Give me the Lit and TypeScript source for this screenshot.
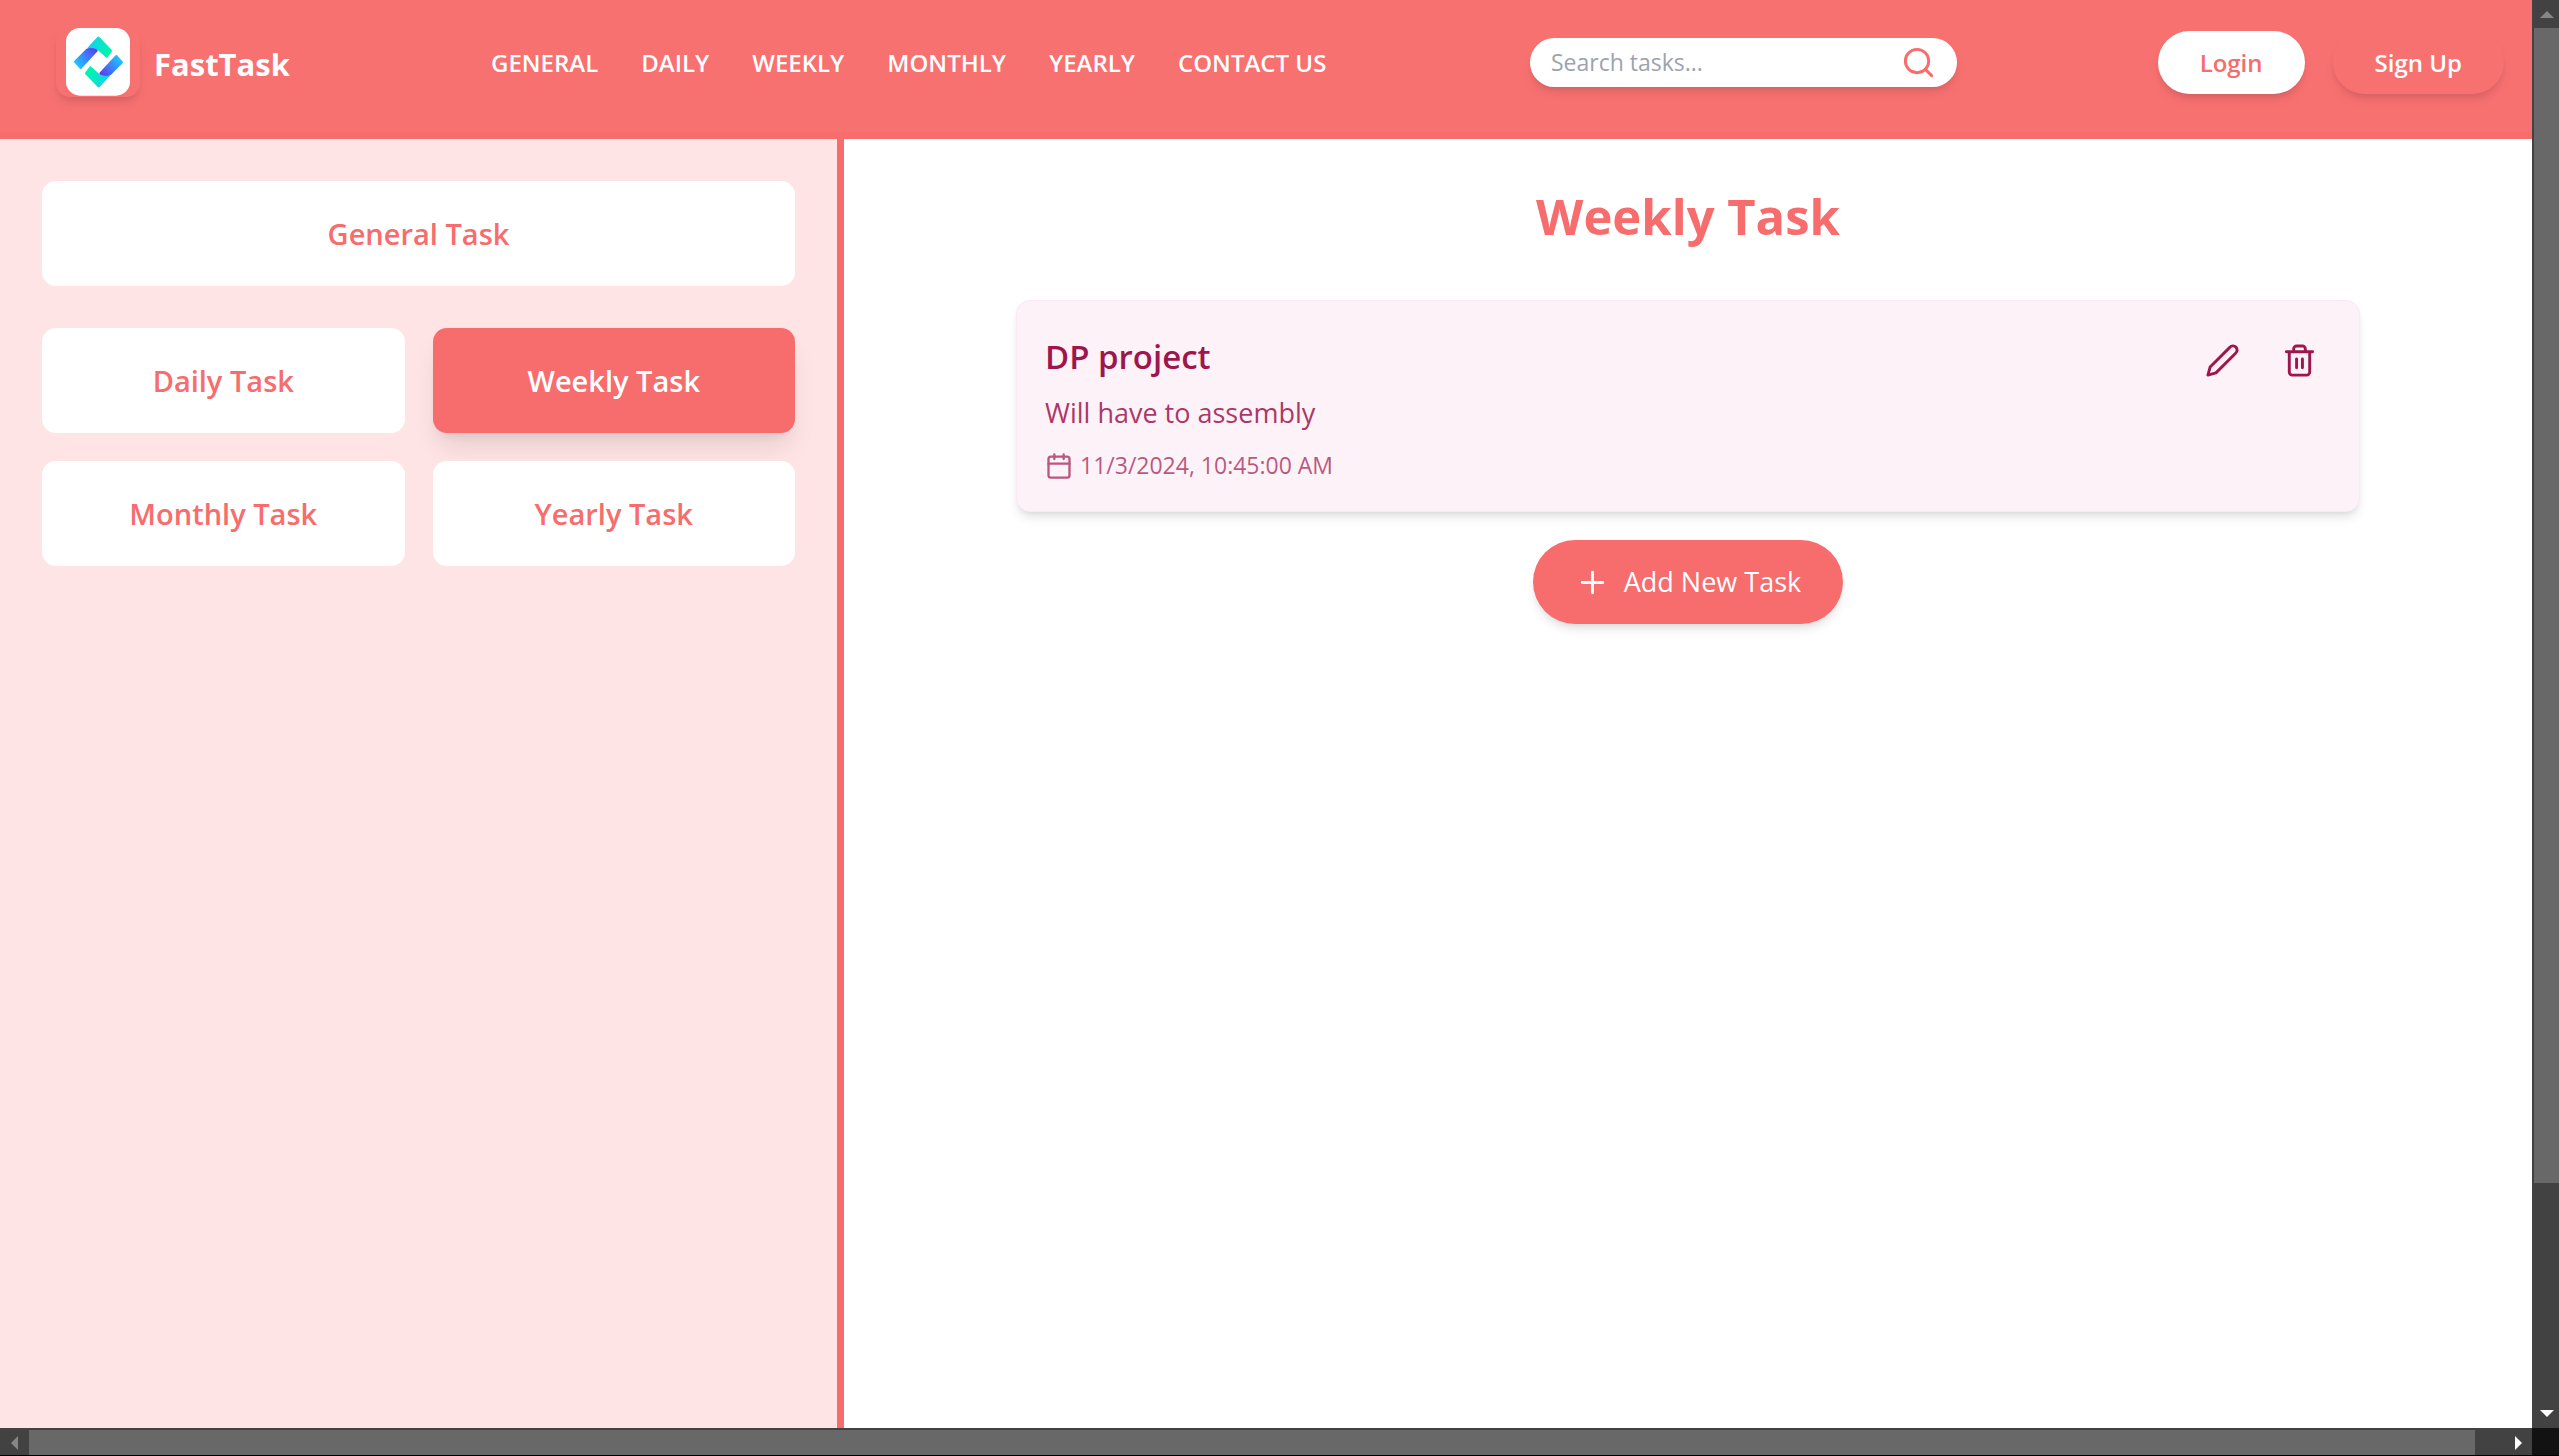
import { LitElement, html, css, svg } from "lit";
import { customElement, state } from "lit/decorators.js";
import { classMap } from "lit/directives/class-map.js";

const NAV = ["GENERAL", "DAILY", "WEEKLY", "MONTHLY", "YEARLY", "CONTACT US"];
const OVERVIEW = "General Task";
const PERIODS = ["Daily Task", "Weekly Task", "Monthly Task", "Yearly Task"];

interface Task {
  title: string;
  note: string;
  due: string;
}

const TASKS: Task[] = [
  { title: "DP project", note: "Will have to assembly", due: "11/3/2024, 10:45:00 AM" },
];

const tokens = css`
  :host {
    --coral: #f76c6c;
    --header: #f87171;
    --blush: #ffe4e5;
    --wine: #9d174d;
    --shadow: 0 7px 11px -2px rgb(0 0 0 / 0.1), 0 4px 7px -4px rgb(0 0 0 / 0.1);
    font-family: "Open Sans", "Noto Sans", sans-serif;
  }
  *, *::before, *::after { box-sizing: border-box; }
  button { font: inherit; border: 0; cursor: pointer; }
  svg { display: block; }
`;

@customElement("brand-logo")
export class BrandLogo extends LitElement {
  static styles = [tokens, css`
    :host { display: block; }
    .brand { display: flex; align-items: center; gap: 14px; color: #fff; text-decoration: none; }
    .plate { display: block; width: 84px; height: 70px; border-radius: 14px; box-shadow: var(--shadow); }
    .mark { width: 84px; height: 70px; }
    .name { padding-top: 4px; font-size: 31px; line-height: 49px; font-weight: 700; }
  `];

  render() {
    return html`
      <a class="brand" href="#home">
        <span class="plate">
          <svg class="mark" viewBox="48 51 252 210" aria-hidden="true">
            <defs>
              <linearGradient id="mint" gradientUnits="userSpaceOnUse" x1="150" y1="105" x2="210" y2="120">
                <stop offset="0" stop-color="#12d2ee" />
                <stop offset="1" stop-color="#00f7a8" />
              </linearGradient>
              <linearGradient id="azure" gradientUnits="userSpaceOnUse" x1="108" y1="168" x2="168" y2="118">
                <stop offset="0" stop-color="#1ccbff" />
                <stop offset="1" stop-color="#5a3cf2" />
              </linearGradient>
              <g id="hook">
                <path d="M175 84 L212 122 L200 139 L175 116 L146 115 Z" fill="url(#mint)" stroke="url(#mint)" stroke-width="8" stroke-linejoin="round" />
                <path d="M106 155 L140 121 Q153 115 169 122 L122 173 Z" fill="url(#azure)" stroke="url(#azure)" stroke-width="8" stroke-linejoin="round" />
              </g>
            </defs>
            <rect x="78" y="54" width="192" height="203" rx="42" fill="#fff" />
            <use href="#hook" />
            <use href="#hook" transform="rotate(180 175.500 156)" />
          </svg>
        </span>
        <span class="name">FastTask</span>
      </a>
    `;
  }
}

@customElement("site-header")
export class SiteHeader extends LitElement {
  static styles = [tokens, css`
    :host { display: block; }
    .bar {
      display: grid;
      grid-template-columns: 491px 1039px 1fr auto;
      align-items: start;
      height: 139px;
      padding: 27px 28px 0 0;
      background: var(--header);
      border-bottom: 7px solid var(--coral);
      color: #fff;
      font-size: 24px;
      line-height: 35px;
    }
    .logo { padding-left: 56px; }
    .links { display: flex; gap: 43px; padding-top: 18px; font-weight: 600; }
    .link { color: #fff; text-decoration: none; }
    .search {
      display: flex;
      align-items: center;
      width: 427px;
      height: 49px;
      margin-top: 11px;
      padding: 0 21px;
      border-radius: 25px;
      background: #fff;
      box-shadow: var(--shadow);
    }
    .field {
      flex: 1;
      min-width: 0;
      padding: 0;
      border: 0;
      outline: 0;
      background: none;
      color: #374151;
      font: inherit;
      font-size: 23px;
    }
    .field::placeholder { color: #9ca3af; opacity: 1; }
    .go { padding: 0; background: none; color: var(--coral); }
    .glass { width: 35px; height: 35px; }
    .account { display: flex; gap: 28px; padding-top: 4px; }
    .pill {
      padding: 14px 42px;
      border-radius: 32px;
      box-shadow: var(--shadow);
      font-weight: 600;
      font-size: 24px;
      line-height: 35px;
      background: var(--header);
      color: #fff;
    }
    .pill.solid { background: #fff; color: var(--coral); }
  `];

  render() {
    return html`
      <header class="bar">
        <brand-logo class="logo"></brand-logo>
        <nav class="links">
          ${NAV.map((n) => html`<a class="link" href="#${n.toLowerCase().replace(" ", "-")}">${n}</a>`)}
        </nav>
        <form class="search" role="search" @submit=${(e: Event) => e.preventDefault()}>
          <input class="field" type="text" placeholder="Search tasks..." aria-label="Search tasks" />
          <button class="go" type="submit" aria-label="Search">
            <svg class="glass" viewBox="0 0 24 24" fill="none" stroke="currentColor" stroke-width="2" stroke-linecap="round" stroke-linejoin="round">
              <circle cx="11" cy="11" r="8" />
              <path d="m21 21-4.300-4.300" />
            </svg>
          </button>
        </form>
        <div class="account">
          <button class="pill solid" type="button">Login</button>
          <button class="pill" type="button">Sign Up</button>
        </div>
      </header>
    `;
  }
}

@customElement("category-panel")
export class CategoryPanel extends LitElement {
  @state() private current = "Weekly Task";

  static styles = [tokens, css`
    :host { display: block; }
    .panel {
      display: flex;
      flex-direction: column;
      gap: 42px;
      height: 100%;
      padding: 42px;
      background: var(--blush);
      border-right: 7px solid var(--coral);
    }
    .periods { display: grid; grid-template-columns: 1fr 1fr; gap: 28px; }
    .tile {
      padding: 28px;
      border-radius: 14px;
      background: #fff;
      color: var(--coral);
      font-size: 29px;
      line-height: 49px;
      font-weight: 600;
    }
    .tile.active {
      background: var(--coral);
      color: #fff;
      box-shadow: 0 18px 26px -5px rgb(0 0 0 / 0.1), 0 7px 11px -7px rgb(0 0 0 / 0.1);
    }
  `];

  private tile(name: string) {
    return html`
      <button type="button" class=${classMap({ tile: true, active: name === this.current })}
        @click=${() => (this.current = name)}>${name}</button>
    `;
  }

  render() {
    return html`
      <aside class="panel">
        ${this.tile(OVERVIEW)}
        <div class="periods">${PERIODS.map((p) => this.tile(p))}</div>
      </aside>
    `;
  }
}

const calendar = svg`<path d="M8 2v4M16 2v4M3 10h18" /><rect width="18" height="18" x="3" y="4" rx="2" />`;
const pencil = svg`<path d="M17 3a2.850 2.830 0 1 1 4 4L7.500 20.500 2 22l1.500-5.500Z" />`;
const trash = svg`<path d="M3 6h18M19 6v14c0 1-1 2-2 2H7c-1 0-2-1-2-2V6M8 6V4c0-1 1-2 2-2h4c1 0 2 1 2 2v2M10 11v6M14 11v6" />`;

@customElement("task-board")
export class TaskBoard extends LitElement {
  static styles = [tokens, css`
    :host { display: block; }
    .board { display: flex; flex-direction: column; align-items: center; padding: 42px 28px; background: #fff; }
    .heading { margin: 0 0 49px; color: var(--coral); font-size: 49px; line-height: 70px; font-weight: 700; }
    .card {
      display: flex;
      justify-content: space-between;
      align-items: flex-start;
      width: 100%;
      max-width: 1344px;
      margin-bottom: 28px;
      padding: 28px;
      border: 1px solid #fce7f3;
      border-radius: 14px;
      background: #fdf2f8;
      color: var(--wine);
      box-shadow: var(--shadow);
    }
    .title { margin: 0; font-size: 33px; line-height: 56px; font-weight: 600; }
    .note { margin: 7px 0 14px; font-size: 27px; line-height: 42px; opacity: 0.85; }
    .due { display: flex; align-items: center; gap: 7px; margin: 0; font-size: 23px; line-height: 35px; opacity: 0.7; }
    .actions { display: flex; gap: 14px; }
    .act { padding: 14px; background: none; color: var(--wine); }
    .icon { width: 35px; height: 35px; fill: none; stroke: currentColor; stroke-width: 2; stroke-linecap: round; stroke-linejoin: round; }
    .icon.small { width: 28px; height: 28px; }
    .add {
      display: flex;
      align-items: center;
      gap: 14px;
      padding: 21px 42px;
      border-radius: 42px;
      background: var(--coral);
      color: #fff;
      font-size: 27px;
      line-height: 42px;
      box-shadow: var(--shadow);
    }
  `];

  render() {
    return html`
      <main class="board">
        <h1 class="heading">Weekly Task</h1>
        ${TASKS.map((t) => html`
          <article class="card">
            <div>
              <h2 class="title">${t.title}</h2>
              <p class="note">${t.note}</p>
              <p class="due"><svg class="icon small" viewBox="0 0 24 24" aria-hidden="true">${calendar}</svg>${t.due}</p>
            </div>
            <div class="actions">
              <button class="act" type="button" aria-label="Edit task"><svg class="icon" viewBox="0 0 24 24">${pencil}</svg></button>
              <button class="act" type="button" aria-label="Delete task"><svg class="icon" viewBox="0 0 24 24">${trash}</svg></button>
            </div>
          </article>
        `)}
        <button class="add" type="button">
          <svg class="icon" viewBox="0 0 24 24" aria-hidden="true"><path d="M12 5v14M5 12h14" /></svg>
          Add New Task
        </button>
      </main>
    `;
  }
}

@customElement("scroll-frame")
export class ScrollFrame extends LitElement {
  static styles = [tokens, css`
    :host {
      display: grid;
      grid-template: minmax(0, 1fr) 27px / minmax(0, 1fr) 27px;
      height: 100vh;
      border-bottom: 1px solid #000;
      box-sizing: border-box;
    }
    .view { display: grid; min-height: 0; overflow: hidden; }
    .track { display: flex; background: #424242; }
    .vertical { flex-direction: column; padding-left: 2px; }
    .horizontal { padding-top: 2px; }
    .thumb { background: #686868; }
    .vertical .thumb { flex: 1155; }
    .horizontal .thumb { flex: 2446; }
    .vertical .rest { flex: 217; }
    .horizontal .rest { flex: 28; }
    .end { display: grid; place-items: center; flex: none; width: 29px; height: 28px; }
    .vertical .end { width: 25px; }
    .horizontal .end { height: 25px; }
    .arrow { width: 14px; height: 14px; fill: #fff; }
    .arrow.dim { fill: #868686; }
    .corner { background: #121212; }
  `];

  private arrow(d: string, dim = false) {
    return html`<span class="end"><svg class=${classMap({ arrow: true, dim })} viewBox="0 0 14 14"><path d=${d} /></svg></span>`;
  }

  render() {
    return html`
      <div class="view"><slot></slot></div>
      <div class="track vertical" aria-hidden="true">
        ${this.arrow("M7 4 L14 11 H0 Z", true)}
        <span class="thumb"></span><span class="rest"></span>
        ${this.arrow("M0 3 H14 L7 10 Z")}
      </div>
      <div class="track horizontal" aria-hidden="true">
        ${this.arrow("M10 0 V14 L3 7 Z", true)}
        <span class="thumb"></span><span class="rest"></span>
        ${this.arrow("M4 0 V14 L11 7 Z")}
      </div>
      <div class="corner"></div>
    `;
  }
}

@customElement("app-root")
export class AppRoot extends LitElement {
  static styles = [tokens, css`
    :host { display: block; }
    .page { display: grid; grid-template-rows: auto 1fr; min-height: 0; background: #fff; }
    .columns { display: grid; grid-template-columns: 1fr 2fr; }
  `];

  render() {
    return html`
      <scroll-frame>
        <div class="page">
          <site-header></site-header>
          <div class="columns">
            <category-panel></category-panel>
            <task-board></task-board>
          </div>
        </div>
      </scroll-frame>
    `;
  }
}
